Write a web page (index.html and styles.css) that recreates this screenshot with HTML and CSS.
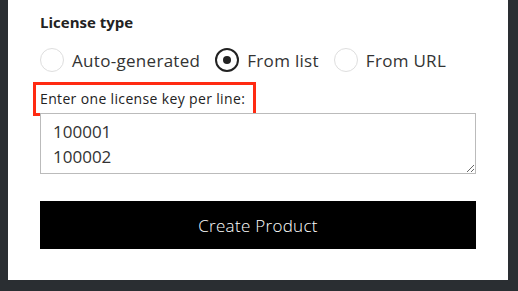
FILE: index.html
```html
<!DOCTYPE html>
<html lang="en">
<head>
    <meta charset="UTF-8">
    <meta name="viewport" content="width=device-width, initial-scale=1.0">
    <title>Create Product</title>
    <link rel="stylesheet" href="styles.css">
</head>
<body>
    <div class="panel">
        <h3 class="title">License type</h3>

        <div class="choices">
            <label class="choice">
                <span class="radio"></span>
                <span>Auto-generated</span>
            </label>
            <label class="choice">
                <span class="radio checked"></span>
                <span>From list</span>
            </label>
            <label class="choice">
                <span class="radio"></span>
                <span>From URL</span>
            </label>
        </div>

        <div class="field">
            <label class="hint">Enter one license key per line:</label>
            <textarea class="keys">100001
100002</textarea>
        </div>

        <button class="submit">Create Product</button>
    </div>
</body>
</html>
```

FILE: styles.css
```css
*{
    padding: 0;
    margin: 0;
    box-sizing: border-box;
}

body{
    height: 100vh;
    background-color: #2a2e32;
    font-family: "Open Sans", "Noto Sans", sans-serif;
    color: #333;
}

.panel {
    width: 500px;
    height: 280px;
    margin-left: 8px;
    padding: 12px 32px 0 32px;
    background-color: #fff;
    display: flex;
    flex-direction: column;
}

.title {
    font-size: 15px;
    line-height: 20px;
    font-weight: 700;
    color: #222;
}

.choices {
    display: flex;
    align-items: center;
    margin-top: 16px;
    height: 24px;
}

.choice {
    display: flex;
    align-items: center;
    gap: 8px;
    font-size: 17px;
    letter-spacing: 0.3px;
    margin-right: 15px;
}

.radio {
    width: 24px;
    height: 24px;
    border-radius: 50%;
    border: 1.5px solid #dedede;
    display: flex;
    align-items: center;
    justify-content: center;
}

.radio.checked {
    border: 2px solid #222;
}

.radio.checked::after {
    content: "";
    width: 8px;
    height: 8px;
    border-radius: 50%;
    background-color: #222;
}

.field {
    display: flex;
    flex-direction: column;
    align-items: flex-start;
    margin-top: 13px;
}

.hint {
    display: inline-block;
    font-size: 14px;
    line-height: 20px;
    letter-spacing: 0.35px;
    padding: 4px 8px 4px 4px;
    margin-left: -4px;
    outline: 3px solid #ff2a12;
    color: #222;
}

.keys {
    width: 100%;
    height: 61px;
    border: 1px solid #bbb;
    padding: 5px 12px;
    font-family: inherit;
    font-size: 17px;
    line-height: 25px;
    color: #333;
    resize: vertical;
}

.submit {
    margin-top: 27px;
    height: 48px;
    width: 100%;
    border: none;
    background-color: #000;
    color: #fff;
    font-family: inherit;
    font-size: 17px;
    font-weight: 300;
    letter-spacing: 0.3px;
}
```
